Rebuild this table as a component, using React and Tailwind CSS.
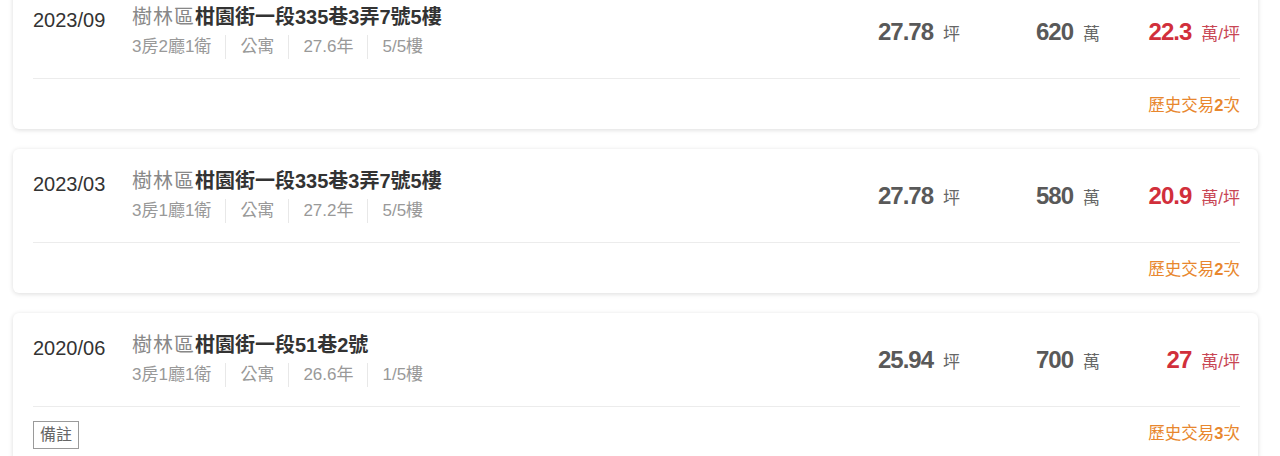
const RECORDS = [
  {
    id: 1,
    date: '2023/09',
    district: '樹林區',
    address: '柑園街一段335巷3弄7號5樓',
    layout: '3房2廳1衛',
    type: '公寓',
    age: '27.6年',
    floor: '5/5樓',
    area: '27.78',
    price: '620',
    unitPrice: '22.3',
    history: 2,
  },
  {
    id: 2,
    date: '2023/03',
    district: '樹林區',
    address: '柑園街一段335巷3弄7號5樓',
    layout: '3房1廳1衛',
    type: '公寓',
    age: '27.2年',
    floor: '5/5樓',
    area: '27.78',
    price: '580',
    unitPrice: '20.9',
    history: 2,
  },
  {
    id: 3,
    date: '2020/06',
    district: '樹林區',
    address: '柑園街一段51巷2號',
    layout: '3房1廳1衛',
    type: '公寓',
    age: '26.6年',
    floor: '1/5樓',
    area: '25.94',
    price: '700',
    unitPrice: '27',
    history: 3,
    note: true,
  },
];

const FONT = "font-['Liberation_Sans','Noto_Sans_CJK_TC',sans-serif]";

function Figure({ value, unit, red }) {
  return (
    <div className="w-[140px] flex items-baseline justify-end">
      <span
        className={`text-[24px] font-bold tracking-[-1px] ${red ? 'text-[#d12f3b]' : 'text-[#595959]'}`}
      >
        {value}
      </span>
      <span className={`ml-[10px] text-[17px] ${red ? 'text-[#c84654]' : 'text-[#666]'}`}>
        {unit}
      </span>
    </div>
  );
}

function RecordCard({ r, first }) {
  const specs = [r.layout, r.type, r.age, r.floor];
  return (
    <div
      className={`bg-white rounded-[6px] shadow-[0_1px_5px_rgba(0,0,0,0.14)] pl-[20px] pr-[18px] ${first ? '-mt-[15px]' : ''}`}
    >
      {/* Top: date, address, figures */}
      <div className="flex items-center pt-[20px] pb-[19px] border-b border-[#ececec]">
        <div className="w-[99px] self-start pt-[3px] text-[20px] leading-[24px] text-[#333]">
          {r.date}
        </div>
        <div className="flex-1 min-w-0">
          <p className="text-[20px] leading-[24px] text-[#333] font-bold">
            <span className="font-normal text-[#888] tracking-[1px]">{r.district}</span>
            {r.address}
          </p>
          <div className="flex mt-[6px] text-[17px] leading-[24px] text-[#999]">
            {specs.map((s, i) => (
              <span
                key={i}
                className={i === 0 ? 'pr-[14px]' : 'px-[14px] border-l border-[#e8e8e8]'}
              >
                {s}
              </span>
            ))}
          </div>
        </div>
        <Figure value={r.area} unit="坪" />
        <Figure value={r.price} unit="萬" />
        <Figure value={r.unitPrice} unit="萬/坪" red />
      </div>

      {/* Bottom: note + history */}
      <div className="flex items-start justify-between pt-[14px] pb-[12px]">
        {r.note ? (
          <span className="h-[28px] px-[6px] border border-[#9a9a9a] text-[16px] leading-[26px] text-[#666]">
            備註
          </span>
        ) : (
          <span />
        )}
        <span className="text-[16.5px] leading-[24px] text-[#e8872e]">
          歷史交易<b>{r.history}</b>次
        </span>
      </div>
    </div>
  );
}

export default function App() {
  return (
    <div className={`${FONT} bg-white w-[1280px] h-[456px] overflow-hidden`}>
      <div className="ml-[13px] w-[1245px] flex flex-col gap-[20px]">
        {RECORDS.map((r, i) => (
          <RecordCard key={r.id} r={r} first={i === 0} />
        ))}
      </div>
    </div>
  );
}
